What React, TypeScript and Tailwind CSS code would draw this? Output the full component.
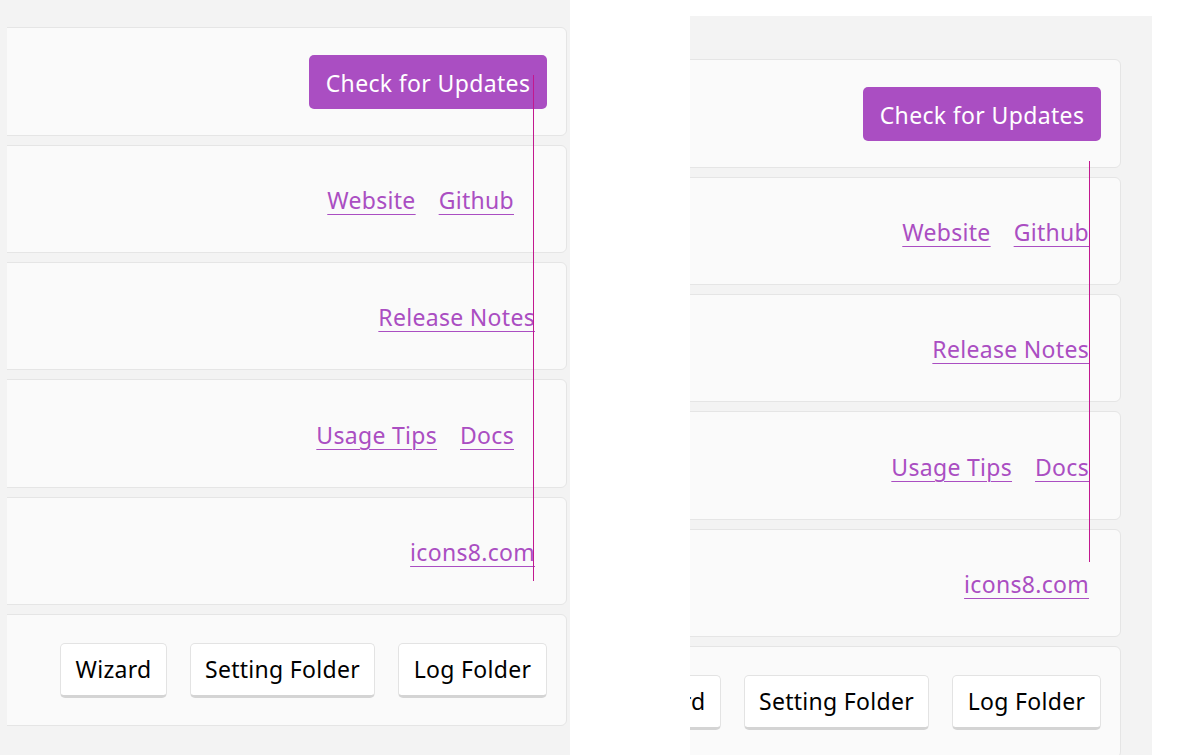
import React from "react";

const FONT = { fontFamily: '"Noto Sans", "Open Sans", "Liberation Sans", sans-serif' };

function Card({ children, className = "" }: { children: React.ReactNode; className?: string }) {
  return (
    <div
      className={
        "-ml-[20px] flex shrink-0 items-center justify-end rounded-[6px] border border-[#e5e5e5] bg-[#fafafa] " +
        className
      }
    >
      {children}
    </div>
  );
}

function Link({ children }: { children: React.ReactNode }) {
  return (
    <a
      href="#"
      className="shrink-0 whitespace-nowrap text-[23px] leading-none tracking-[0.3px] text-[#aa4ec2] underline decoration-1 underline-offset-[5px]"
    >
      {children}
    </a>
  );
}

function Btn({ children, w }: { children: React.ReactNode; w: string }) {
  return (
    <button
      className={
        "flex h-[55px] shrink-0 items-center justify-center whitespace-nowrap rounded-[5px] border border-[#e3e3e3] border-b-[3px] border-b-[#d4d4d4] bg-white pt-[1px] text-[23px] tracking-[0.3px] text-black " +
        w
      }
    >
      {children}
    </button>
  );
}

function Panel({ twoLinkPad, linkPad }: { twoLinkPad: string; linkPad: string }) {
  return (
    <div className="flex flex-col gap-[9px]">
      <Card className="h-[109px] pr-[19px]">
        <button className="flex h-[54px] w-[238px] shrink-0 items-center justify-center whitespace-nowrap rounded-[5px] bg-[#aa4ec2] pt-[3px] text-[23px] tracking-[0.35px] text-white">
          Check for Updates
        </button>
      </Card>
      <Card className={"h-[108px] gap-[23px] pt-[3px] " + twoLinkPad}>
        <Link>Website</Link>
        <Link>Github</Link>
      </Card>
      <Card className={"h-[108px] pt-[3px] " + linkPad}>
        <Link>Release Notes</Link>
      </Card>
      <Card className={"h-[109px] gap-[23px] pt-[3px] " + twoLinkPad}>
        <Link>Usage Tips</Link>
        <Link>Docs</Link>
      </Card>
      <Card className={"h-[108px] pt-[3px] " + linkPad}>
        <Link>icons8.com</Link>
      </Card>
      <Card className="h-[112px] gap-[23px] pr-[19px]">
        <Btn w="w-[107px]">Wizard</Btn>
        <Btn w="w-[185px]">Setting Folder</Btn>
        <Btn w="w-[149px]">Log Folder</Btn>
      </Card>
    </div>
  );
}

export default function App() {
  return (
    <div className="flex h-[755px] w-[1201px] overflow-hidden bg-white" style={FONT}>
      <div className="relative h-full w-[570px] shrink-0 bg-[#f3f3f3] pl-[7px]">
        <div className="h-full overflow-hidden pr-[3px] pt-[27px]">
          <Panel twoLinkPad="pr-[52px]" linkPad="pr-[31px]" />
        </div>
        <div className="absolute left-[533px] top-[75px] h-[506px] w-px bg-[#c2188f]" />
      </div>
      <div className="relative ml-[120px] mt-[16px] h-[739px] w-[462px] shrink-0 bg-[#f3f3f3]">
        <div className="h-full overflow-hidden pr-[31px] pt-[43px]">
          <Panel twoLinkPad="pr-[31px]" linkPad="pr-[31px]" />
        </div>
        <div className="absolute left-[399px] top-[145px] h-[401px] w-px bg-[#c2188f]" />
      </div>
    </div>
  );
}
